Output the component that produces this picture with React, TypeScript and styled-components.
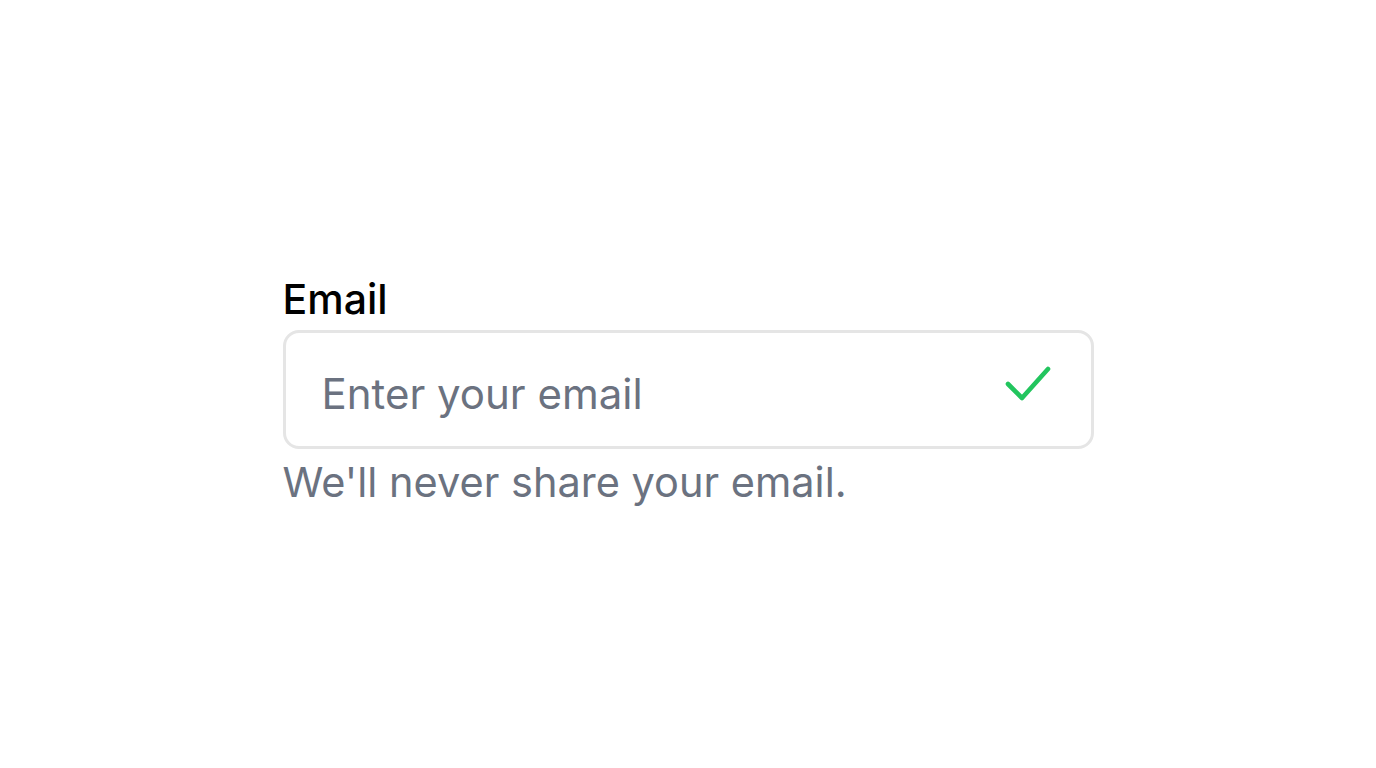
import React from "react";
import styled, { createGlobalStyle } from "styled-components";

const Global = createGlobalStyle`
  html, body { margin: 0; padding: 0; background: #ffffff; }
  body { font-family: Inter, "Noto Sans", sans-serif; }
`;

const Page = styled.div`
  box-sizing: border-box;
  width: 1376px;
  height: 768px;
  padding-top: 13px;
  display: flex;
  align-items: center;
  justify-content: center;
`;

const Field = styled.div`
  width: 811px;
  display: flex;
  flex-direction: column;
`;

const Label = styled.label`
  font-size: 41px;
  font-weight: 500;
  color: #000000;
  line-height: 50px;
  margin-bottom: 6px;
`;

const InputBox = styled.div`
  box-sizing: border-box;
  height: 119px;
  border: 3px solid #e5e5e5;
  border-radius: 16px;
  display: flex;
  align-items: center;
  padding: 0 40px 0 36px;
  margin-bottom: 8px;
`;

const Input = styled.input`
  flex: 1;
  border: none;
  outline: none;
  background: transparent;
  font-family: Inter, sans-serif;
  font-size: 42px;
  color: #111827;
  padding: 7px 0 0 0;
  &::placeholder { color: #6b7280; }
`;

const Help = styled.p`
  margin: 0;
  font-size: 41.5px;
  line-height: 50px;
  color: #6b7280;
`;

const CheckSvg = styled.svg`
  flex: none;
  margin-bottom: 12px;
`;

const CheckIcon = () => (
  <CheckSvg width="48" height="36" viewBox="0 0 48 36" fill="none">
    <path d="M5 18 L19 32 L45 3" stroke="#22c55e" strokeWidth="4.6" strokeLinecap="round" strokeLinejoin="round" />
  </CheckSvg>
);

export default function App() {
  return (
    <>
      <Global />
      <Page>
        <Field>
          <Label htmlFor="email">Email</Label>
          <InputBox>
            <Input id="email" type="email" placeholder="Enter your email" />
            <CheckIcon />
          </InputBox>
          <Help>We'll never share your email.</Help>
        </Field>
      </Page>
    </>
  );
}
